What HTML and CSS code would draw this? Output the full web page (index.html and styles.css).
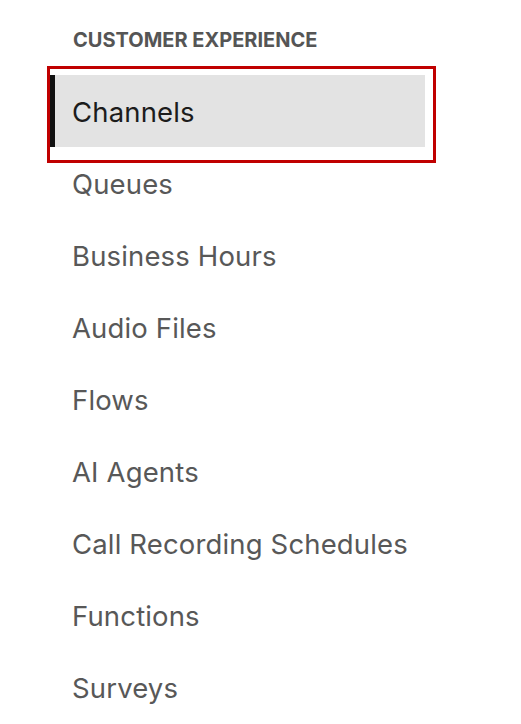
FILE: index.html
```html
<!DOCTYPE html>
<html lang="en">
<head>
<meta charset="utf-8">
<title>Customer Experience</title>
<link rel="stylesheet" href="styles.css">
</head>
<body>
<nav class="nav">
  <div class="nav-title">CUSTOMER EXPERIENCE</div>
  <ul class="nav-list">
    <li class="nav-item active"><span>Channels</span><div class="highlight"></div></li>
    <li class="nav-item"><span>Queues</span></li>
    <li class="nav-item"><span>Business Hours</span></li>
    <li class="nav-item"><span>Audio Files</span></li>
    <li class="nav-item"><span>Flows</span></li>
    <li class="nav-item"><span>AI Agents</span></li>
    <li class="nav-item"><span>Call Recording Schedules</span></li>
    <li class="nav-item"><span>Functions</span></li>
    <li class="nav-item"><span>Surveys</span></li>
  </ul>
</nav>
</body>
</html>
```
FILE: styles.css
```css
html, body {
  margin: 0;
  padding: 0;
  background: #ffffff;
}
body {
  font-family: Inter, "Noto Sans", sans-serif;
}
.nav {
  padding-left: 50px;
  width: 375px;
}
.nav-title {
  padding-top: 28px;
  margin-left: 23px;
  line-height: 24px;
  height: 24px;
  margin-bottom: 23px;
  font-size: 20px;
  font-weight: 700;
  color: #555555;
}
.nav-list {
  list-style: none;
  margin: 0;
  padding: 0;
}
.nav-item {
  position: relative;
  height: 72px;
  display: flex;
  align-items: center;
  padding-left: 22px;
  font-size: 27.5px;
  letter-spacing: 0.15px;
  color: #585858;
}
.nav-item span {
  margin-top: 1px;
}
.nav-item.active {
  background: #e3e3e3;
  border-left: 5px solid #111111;
  padding-left: 17px;
  color: #1c1c1c;
}
.highlight {
  position: absolute;
  left: -8px;
  top: -9px;
  width: 389px;
  height: 97px;
  box-sizing: border-box;
  border: 3px solid #c00000;
}
```
